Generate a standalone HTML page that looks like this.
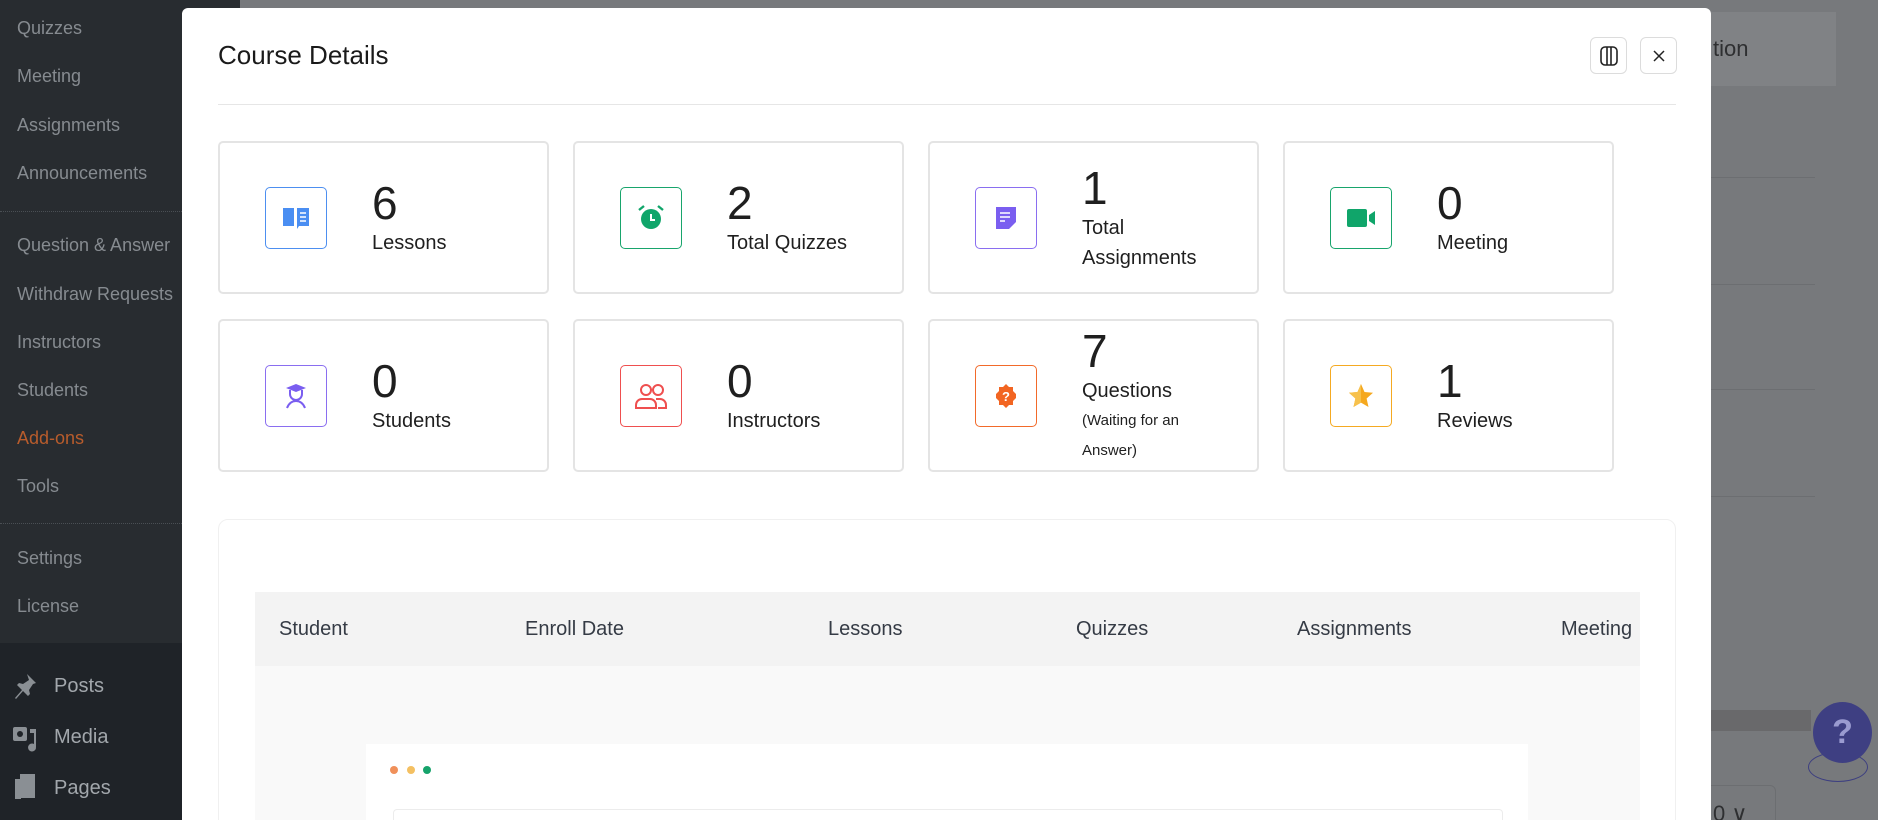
<!DOCTYPE html>
<html><head><meta charset="utf-8"><style>
*{box-sizing:border-box;margin:0;padding:0}
html,body{width:1878px;height:820px;overflow:hidden}
body{background:#77797c;font-family:"Liberation Sans",sans-serif}
#w{position:relative;width:1878px;height:820px;overflow:hidden;background:#77797c}
.side{position:absolute;left:0;top:0;width:240px;height:820px;background:#282c30}
.side .low{position:absolute;left:0;top:643px;width:240px;height:177px;background:#1f2328}
.si{position:absolute;left:17px;font-size:18px;color:#868b90}
.sep{position:absolute;left:0;width:240px;border-top:1px dotted #4a4f54}
.mi{position:absolute;left:54px;font-size:20px;color:#a2a7ac}
.modal{position:absolute;left:182px;top:8px;width:1529px;height:812px;background:#fff;border-radius:6px 6px 0 0;overflow:hidden}
.title{position:absolute;left:36px;top:32px;font-size:26px;color:#1a1a1a;font-weight:500}
.hr{position:absolute;left:36px;top:96px;width:1458px;border-top:1px solid #e6e6e6}
.btn{position:absolute;top:29px;width:37px;height:37px;border:1px solid #dcdcdc;border-radius:6px;display:flex;align-items:center;justify-content:center}
.card{position:absolute;width:331px;height:153px;border:2px solid #e4e4e4;border-radius:5px;background:#fff}
.ic{position:absolute;left:45px;top:44px;width:62px;height:62px;border:1.5px solid;border-radius:5px;display:flex;align-items:center;justify-content:center}
.tx{position:absolute;left:152px;top:0;height:149px;display:flex;flex-direction:column;justify-content:center;color:#1f1f1f}
.num{font-size:46px;line-height:50px;font-weight:500}
.lab{font-size:20px;line-height:30px}
.sm{font-size:15px;line-height:30px}
.panel{position:absolute;left:36px;top:511px;width:1458px;height:400px;border:1px solid #f0f0f0;border-radius:10px}
.th{position:absolute;left:73px;top:584px;width:1385px;height:74px;background:#f3f3f3;overflow:hidden}
.th span{position:absolute;top:26px;font-size:20px;color:#353b45;white-space:nowrap}
</style></head><body><div id="w">
<div class="side">
<div class="si" style="top:18px">Quizzes</div>
<div class="si" style="top:66px">Meeting</div>
<div class="si" style="top:115px">Assignments</div>
<div class="si" style="top:163px">Announcements</div>
<div class="sep" style="top:211px"></div>
<div class="si" style="top:235px">Question &amp; Answer</div>
<div class="si" style="top:284px">Withdraw Requests</div>
<div class="si" style="top:332px">Instructors</div>
<div class="si" style="top:380px">Students</div>
<div class="si" style="top:428px;color:#b85c2c">Add-ons</div>
<div class="si" style="top:476px">Tools</div>
<div class="sep" style="top:523px"></div>
<div class="si" style="top:548px">Settings</div>
<div class="si" style="top:596px">License</div>
<div class="low"></div>
<svg style="position:absolute;left:12px;top:672px" width="26" height="28" viewBox="0 0 26 28"><path d="M15 2l9 9-3 1-4 6 1 4-2 2-5-5-7 8-1-1 7-8-5-5 2-2 4 1 6-4z" fill="#8a8f94"/></svg>
<div class="mi" style="top:675px">Posts</div>
<svg style="position:absolute;left:12px;top:723px" width="28" height="30" viewBox="0 0 28 30"><rect x="1" y="4" width="14" height="14" rx="2" fill="#8a8f94"/><circle cx="8" cy="11" r="3" fill="#1f2328"/><path d="M18 6h6v18a4 4 0 1 1-2-3V10h-4z" fill="#8a8f94"/></svg>
<div class="mi" style="top:726px">Media</div>
<svg style="position:absolute;left:14px;top:773px" width="24" height="28" viewBox="0 0 24 28"><rect x="1" y="6" width="6" height="20" fill="#8a8f94"/><rect x="6" y="1" width="15" height="24" fill="#8a8f94"/></svg>
<div class="mi" style="top:777px">Pages</div>
</div>
<div style="position:absolute;left:1711px;top:12px;width:125px;height:74px;background:#808285"></div>
<div style="position:absolute;left:1713px;top:36px;font-size:22px;color:#2e2f31">tion</div>
<div style="position:absolute;left:1711px;top:177px;width:104px;border-top:1px solid #6c6e71"></div>
<div style="position:absolute;left:1711px;top:284px;width:104px;border-top:1px solid #6c6e71"></div>
<div style="position:absolute;left:1711px;top:389px;width:104px;border-top:1px solid #6c6e71"></div>
<div style="position:absolute;left:1711px;top:496px;width:104px;border-top:1px solid #6c6e71"></div>
<div style="position:absolute;left:1711px;top:710px;width:100px;height:21px;background:#69696b"></div>
<div style="position:absolute;left:1700px;top:785px;width:76px;height:50px;border:1px solid #6c6e71;border-radius:6px;font-size:22px;color:#2e2f31;padding:15px 0 0 12px">0 ∨</div>
<div style="position:absolute;left:1808px;top:752px;width:60px;height:30px;border:1px solid #3d3f80;border-radius:50%"></div>
<div style="position:absolute;left:1813px;top:702px;width:59px;height:61px;background:#3e3f82;border-radius:50%;color:#9a9bd0;font-size:34px;font-weight:bold;text-align:center;line-height:61px">?</div>

<div class="modal">
<div class="title">Course Details</div>
<div class="btn" style="left:1408px"><svg width="20" height="22" viewBox="0 0 20 22"><rect x="2" y="2" width="16" height="18" rx="4" fill="none" stroke="#222" stroke-width="1.6"/><path d="M8 2v18M12 2v18" stroke="#222" stroke-width="1.6"/></svg></div>
<div class="btn" style="left:1458px"><svg width="14" height="14" viewBox="0 0 14 14"><path d="M2 2l10 10M12 2L2 12" stroke="#222" stroke-width="1.5"/></svg></div>
<div class="hr"></div>

<div class="card" style="left:36px;top:133px"><div class="ic" style="border-color:#4d8ff0"><svg width="28" height="26" viewBox="0 0 28 26"><path d="M1 3h11v18H1z M15 3h12v18H17l-2 3z" fill="#4a8ef2"/><path d="M18 8h6M18 12h6M18 16h6" stroke="#fff" stroke-width="1.6"/></svg></div><div class="tx"><div class="num">6</div><div class="lab">Lessons</div></div></div>
<div class="card" style="left:391px;top:133px"><div class="ic" style="border-color:#18a56c"><svg width="30" height="30" viewBox="0 0 30 30"><circle cx="15" cy="16" r="10" fill="#10a56a"/><path d="M15 11v6h4" stroke="#fff" stroke-width="2" fill="none"/><path d="M3 7l5-4M27 7l-5-4" stroke="#10a56a" stroke-width="2.4"/></svg></div><div class="tx"><div class="num">2</div><div class="lab">Total Quizzes</div></div></div>
<div class="card" style="left:746px;top:133px"><div class="ic" style="border-color:#8a6ef0"><svg width="26" height="28" viewBox="0 0 26 28"><path d="M3 3h20v15l-7 7H3z" fill="#7a5ef0"/><path d="M7 9h10M7 13h10M7 17h5" stroke="#fff" stroke-width="1.6"/></svg></div><div class="tx"><div class="num">1</div><div class="lab">Total<br>Assignments</div></div></div>
<div class="card" style="left:1101px;top:133px"><div class="ic" style="border-color:#18a56c"><svg width="32" height="24" viewBox="0 0 32 24"><rect x="2" y="3" width="20" height="18" rx="2" fill="#10a56a"/><path d="M24 9l6-4v14l-6-4z" fill="#10a56a"/></svg></div><div class="tx"><div class="num">0</div><div class="lab">Meeting</div></div></div>

<div class="card" style="left:36px;top:311px"><div class="ic" style="border-color:#8a6ef0"><svg width="28" height="28" viewBox="0 0 28 28"><path d="M4 6l10-4 10 4-10 4z" fill="#7a5ef0"/><path d="M8 8v4a6 6 0 0 0 12 0V8" fill="none" stroke="#7a5ef0" stroke-width="2"/><path d="M5 26c2-5 5-7 9-7s7 2 9 7" fill="none" stroke="#7a5ef0" stroke-width="2"/></svg></div><div class="tx"><div class="num">0</div><div class="lab">Students</div></div></div>
<div class="card" style="left:391px;top:311px"><div class="ic" style="border-color:#ef4f4f"><svg width="36" height="30" viewBox="0 0 36 30"><circle cx="13" cy="9" r="5" fill="none" stroke="#ef4f4f" stroke-width="2"/><circle cx="25" cy="9" r="5" fill="none" stroke="#ef4f4f" stroke-width="2"/><path d="M3 27v-3a6 6 0 0 1 6-6h8a6 6 0 0 1 6 6v3zM23 18h4a6 6 0 0 1 6 6v3h-8" fill="none" stroke="#ef4f4f" stroke-width="2"/></svg></div><div class="tx"><div class="num">0</div><div class="lab">Instructors</div></div></div>
<div class="card" style="left:746px;top:311px"><div class="ic" style="border-color:#f26a2a"><svg width="28" height="28" viewBox="0 0 28 28"><path d="M14 2l3 3h4v4l3 3v4l-3 3v4h-4l-3 3-3-3H7v-4l-3-3v-4l3-3V5h4z" fill="#f26522"/><text x="14" y="19" font-size="13" font-weight="bold" fill="#fff" text-anchor="middle" font-family="Liberation Sans">?</text></svg></div><div class="tx"><div class="num">7</div><div class="lab">Questions</div><div class="sm">(Waiting for an<br>Answer)</div></div></div>
<div class="card" style="left:1101px;top:311px"><div class="ic" style="border-color:#f5aa22"><svg width="28" height="28" viewBox="0 0 28 28"><path d="M14 2l3.5 8 8.5.8-6.4 5.7 1.9 8.5L14 20.6 6.5 25l1.9-8.5L2 10.8l8.5-.8z" fill="#f5a81f"/><path d="M14 2v18.6L6.5 25 8.4 16.5 2 10.8l8.5-.8z" fill="#f7c14c"/></svg></div><div class="tx"><div class="num">1</div><div class="lab">Reviews</div></div></div>

<div class="panel"></div>
<div class="th"><span style="left:24px">Student</span><span style="left:270px">Enroll Date</span><span style="left:573px">Lessons</span><span style="left:821px">Quizzes</span><span style="left:1042px">Assignments</span><span style="left:1306px">Meeting</span></div>
<div style="position:absolute;left:73px;top:658px;width:1385px;height:180px;background:#f9f9f9"></div>
<div style="position:absolute;left:184px;top:736px;width:1162px;height:100px;background:#fff"></div>
<div style="position:absolute;left:208px;top:758px;width:8px;height:8px;border-radius:50%;background:#f0905a"></div>
<div style="position:absolute;left:225px;top:758px;width:8px;height:8px;border-radius:50%;background:#f4c062"></div>
<div style="position:absolute;left:241px;top:758px;width:8px;height:8px;border-radius:50%;background:#16a36b"></div>
<div style="position:absolute;left:211px;top:801px;width:1110px;height:30px;border:1px solid #ececec;border-radius:4px"></div>
</div>
</div></body></html>
